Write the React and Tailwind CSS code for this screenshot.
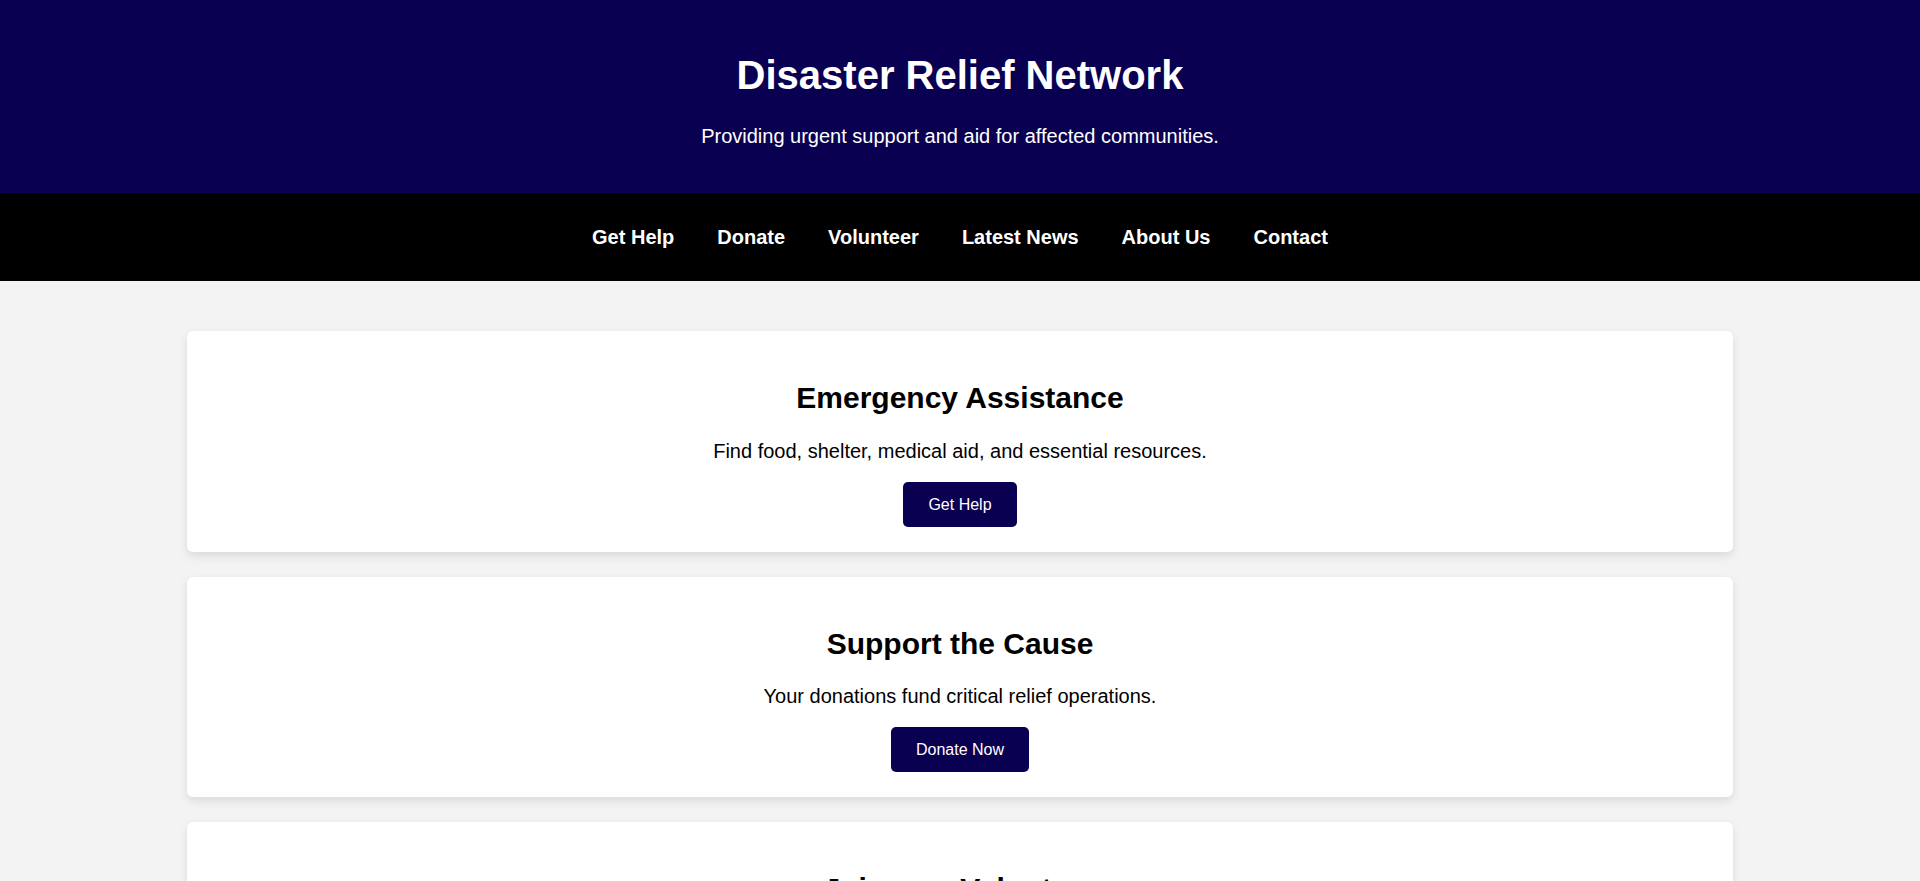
import React from "react";

const navItems = ["Get Help", "Donate", "Volunteer", "Latest News", "About Us", "Contact"];

const cards = [
  { title: "Emergency Assistance", text: "Find food, shelter, medical aid, and essential resources.", button: "Get Help" },
  { title: "Support the Cause", text: "Your donations fund critical relief operations.", button: "Donate Now" },
  { title: "Join as a Volunteer", text: "Help us deliver aid and rebuild communities.", button: "Sign Up" },
  { title: "Latest News", text: "Stay informed with updates from the affected regions.", button: "Read More" },
  { title: "Shelter Locations", text: "Locate safe shelters and evacuation centers near you.", button: "View Map" },
  { title: "Medical Support", text: "Access first aid, clinics, and mobile health units.", button: "Find Care" },
  { title: "About Us", text: "Learn about our mission and the people behind it.", button: "Learn More" },
  { title: "Contact Us", text: "Reach our support team any time, day or night.", button: "Contact" },
];

function Card({ title, text, button }) {
  return (
    <section className="w-[1546px] mx-auto bg-white rounded-[6px] shadow-[0_4px_10px_rgba(0,0,0,0.1)] pt-[50px] pb-[25px] flex flex-col items-center text-center">
      <h2 className="text-[30px] leading-[1.15] font-bold text-black mb-[24px]">{title}</h2>
      <p className="text-[20px] leading-[1.15] text-black mb-[19px]">{text}</p>
      <button className="h-[45px] px-[25px] pt-[2px] rounded-[5px] bg-[#0a0052] text-white text-[16px] leading-[1.15]">
        {button}
      </button>
    </section>
  );
}

export default function App() {
  return (
    <div className="overflow-x-hidden bg-[#f3f3f3]" style={{ fontFamily: '"Liberation Sans", Arial, sans-serif' }}>
      <div className="w-screen bg-[#f3f3f3]">
        <header className="bg-[#0a0052] text-white text-center pt-[52px] pb-[45px]">
          <h1 className="text-[40px] leading-[1.15] font-bold mb-[27px]">Disaster Relief Network</h1>
          <p className="text-[20px] leading-[1.15]">Providing urgent support and aid for affected communities.</p>
        </header>
        <nav className="bg-black h-[88px] flex justify-center items-center pt-[2px]">
          <ul className="flex gap-[43px]">
            {navItems.map((item) => (
              <li key={item}>
                <a href="#" className="text-white font-bold text-[20px] leading-[1.15]">
                  {item}
                </a>
              </li>
            ))}
          </ul>
        </nav>
        <main className="pt-[50px] pb-[50px] flex flex-col gap-[25px]">
          {cards.map((c) => (
            <Card key={c.title} {...c} />
          ))}
        </main>
        <footer className="bg-black text-white text-center py-[30px] text-[16px] leading-[1.15]">
          © 2024 Disaster Relief Network. All rights reserved.
        </footer>
      </div>
    </div>
  );
}
